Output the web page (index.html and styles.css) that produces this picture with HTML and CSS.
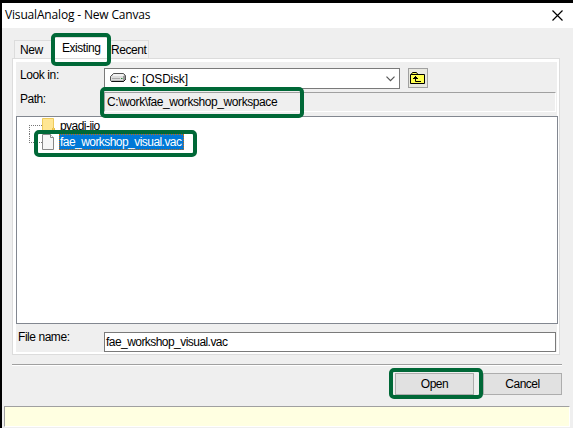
FILE: index.html
```html
<!DOCTYPE html>
<html lang="en">
<head>
<meta charset="utf-8">
<title>VisualAnalog - New Canvas</title>
<link rel="stylesheet" href="styles.css">
</head>
<body>
<div class="window">
  <header class="titlebar">
    <span class="title">VisualAnalog - New Canvas</span>
    <svg class="close" width="11" height="11" viewBox="0 0 11 11"><path d="M.5 .5l10 10M10.5 .5l-10 10" stroke="#000" stroke-width="1.2"/></svg>
  </header>
  <main class="body">
    <nav class="tabs">
      <div class="tab tab-new">New</div>
      <div class="tab tab-existing">Existing<i class="mark mark-tab"></i></div>
      <div class="tab tab-recent">Recent</div>
    </nav>
    <section class="pane">
      <div class="pane-content">
        <div class="look-row">
          <label class="look-label">Look in:</label>
          <div class="select">
            <svg class="drive" width="16" height="9" viewBox="0 0 16 9"><path d="M3.500 .5h10l2 2v4l-2 2h-12l-1-1v-4z" fill="#999" stroke="#555"/><path d="M3.500 1h10l.5 2H2z" fill="#f2f2f2"/><path d="M1 3h12v4.500H1z" fill="#dedede"/><path d="M2 5.500h8" stroke="#aaa"/><path d="M11 5.500h1.500" stroke="#2a8a3a"/><path d="M1.500 8.500h12l2-2" fill="none" stroke="#111"/></svg>
            <span class="drive-name">c: [OSDisk]</span>
            <svg class="chevron" width="9" height="6" viewBox="0 0 9 6"><path d="M.5 .7l4 4 4-4" fill="none" stroke="#555" stroke-width="1.200"/></svg>
          </div>
          <div class="up-button">
            <svg width="16" height="14" viewBox="0 0 16 14"><path d="M1 13V3l1.500-1.500h4L8 3h6v10z" fill="#ffff50"/><path d="M.5 12.500v-9h14v9zM1.500 3l1-1.500h4L7.500 3" fill="none" stroke="#000"/><path d="M5.500 5v5.500H11M3 7.500h5M4 6.500h3" fill="none" stroke="#000"/></svg>
          </div>
        </div>
        <div class="path-row">
          <label class="path-label">Path:</label>
          <div class="path-value"><span>C:\work\fae_workshop_workspace</span><i class="mark mark-path"></i></div>
        </div>
        <div class="tree">
          <div class="node">
            <i class="branch branch-first"></i>
            <svg width="13" height="15" viewBox="0 0 13 15"><path d="M.5 .5h11v9l1 1V14.500H.5z" fill="#ffe693" stroke="#efcb5c"/><path d="M10.500 14V10.500l1-1 1 1V14z" fill="#f6cf5c" stroke="#e2b944"/></svg>
            <span class="node-name">pyadi-iio</span>
          </div>
          <div class="node">
            <i class="branch branch-last"></i>
            <svg width="13" height="16" viewBox="0 0 13 16"><path d="M.5 .5h8l3 3v12H.5z" fill="#f6f6f6" stroke="#888"/><path d="M8.500 .5v3h3" fill="#fff" stroke="#888"/></svg>
            <span class="node-name selected">fae_workshop_visual.vac</span>
            <i class="mark mark-file"></i>
          </div>
        </div>
        <div class="name-row">
          <label class="name-label">File name:</label>
          <div class="name-input"><span>fae_workshop_visual.vac</span></div>
        </div>
      </div>
    </section>
    <hr class="divider">
    <div class="actions">
      <div class="button open"><span>Open</span><i class="mark mark-open"></i></div>
      <div class="button cancel"><span>Cancel</span></div>
    </div>
    <footer class="status"></footer>
  </main>
</div>
</body>
</html>
```
FILE: styles.css
```css
* { box-sizing: border-box; }
body {
  margin: 0;
  width: 573px;
  height: 428px;
  overflow: hidden;
  background: #000;
  color: #000;
  font: 12px/14px "Liberation Sans", Arial, sans-serif;
}
.window { margin: 3px 0 0 2px; width: 571px; height: 425px; background: #efefef; }
.titlebar {
  height: 25px;
  display: flex;
  align-items: center;
  justify-content: space-between;
  padding: 0 10px 1px 3px;
  background: #fff;
}
.title { font: 12px/16px "Open Sans", "Noto Sans", sans-serif; letter-spacing: -0.17px; white-space: nowrap; }
.body { height: 400px; display: flex; flex-direction: column; }
.tabs { height: 30px; padding: 10px 0 0 12px; display: flex; align-items: flex-end; }
.tab { height: 18px; border: 1px solid #dcdcdc; border-bottom: 0; padding-top: 2px; background: #f2f2f2; white-space: nowrap; letter-spacing: -0.45px; }
.tab-new { width: 38px; padding-left: 5px; }
.tab-existing { position: relative; z-index: 2; width: 58px; height: 21px; padding: 3px 0 0 9px; background: #fff; }
.tab-recent { width: 39px; }
.pane { width: 548px; height: 297px; margin-left: 10px; border: 1px solid #dcdcdc; background: #fff; padding: 3px 2px 2px 3px; }
.pane-content { height: 290px; background: #efefef; }
.look-row { height: 29px; display: flex; padding: 6px 0 0 4px; }
.look-label, .path-label, .name-label { flex: none; white-space: nowrap; }
.look-label { width: 84px; letter-spacing: -0.4px; }
.select { width: 296px; height: 21px; display: flex; align-items: center; border: 1px solid #7a7a7a; background: #fff; padding: 0 4px 0 5px; }
.drive { margin-bottom: 2px; }
.drive-name { margin-left: 4px; letter-spacing: -0.2px; }
.chevron { margin-left: auto; }
.up-button { margin-left: 8px; width: 20px; height: 20px; border: 1px solid #a0a0a0; background: #e8e8e0; display: flex; align-items: center; justify-content: center; }
.path-row { display: flex; height: 25px; padding: 1px 1px 0 4px; }
.path-label { width: 84px; letter-spacing: -0.5px; }
.path-value { position: relative; flex: 1; height: 20px; border: 1px solid #a0a0a0; border-right-color: #fff; border-bottom-color: #fff; padding: 2px 0 0 2px; white-space: nowrap; letter-spacing: -0.42px; }
.tree { width: 542px; height: 208px; border: 1px solid #828790; background: #fff; padding: 1px 0 0 12px; }
.node { position: relative; display: flex; height: 16px; align-items: flex-start; }
.branch { width: 13px; flex: none; border-left: 1px dotted #777; }
.branch-first { height: 9px; margin-top: 7px; border-top: 1px dotted #777; }
.branch-last { height: 9px; border-bottom: 1px dotted #777; }
.node-name { margin-left: 4px; padding: 0 2px 0 1px; height: 16px; line-height: 16px; white-space: nowrap; letter-spacing: -0.55px; }
.selected { width: 125px; background: #0078d7; color: #fff; outline: 1px dotted #c66b10; outline-offset: -1px; }
.name-row { display: flex; padding: 6px 1px 0 2px; }
.name-label { width: 86px; letter-spacing: -0.45px; }
.name-input { flex: 1; height: 20px; margin-top: 2px; border: 1px solid #7a7a7a; background: #fff; padding: 2px 0 0 1px; white-space: nowrap; letter-spacing: -0.55px; }
.divider { width: 550px; height: 2px; margin: 9px 0 0 10px; border: 0; border-top: 1px solid #a0a0a0; background: #fff; }
.actions { display: flex; margin: 7px 0 0 393px; gap: 9px; }
.button { position: relative; width: 79px; height: 22px; border: 1px solid #adadad; background: #e1e1e1; text-align: center; line-height: 20px; letter-spacing: -0.5px; }
.status { width: 566px; height: 21px; margin: 11px 0 0 2px; border: 1px solid #a0a0a0; border-right-color: #fff; border-bottom-color: #fff; background: #ffffe1; }
.mark { position: absolute; z-index: 3; border: 4px solid #006837; border-radius: 5px; }
.mark-tab { left: -2px; top: -5px; width: 60px; height: 33px; }
.mark-path { left: -5px; top: -6px; width: 204px; height: 31px; }
.mark-file { left: 5px; top: -4px; width: 163px; height: 27px; }
.mark-open { left: -7px; top: -6px; width: 94px; height: 31px; }
```
